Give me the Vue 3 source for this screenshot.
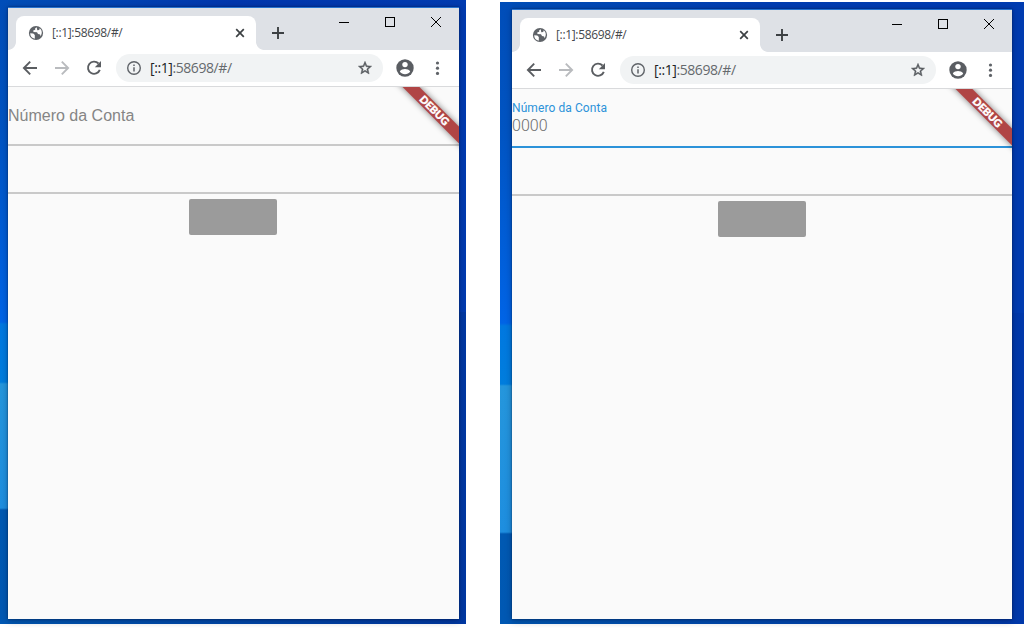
<script setup>
const desktops = [
  { id: 'left', label: 'idle' },
  { id: 'right', label: 'focused' },
]
</script>

<template>
  <main class="page">
    <section v-for="d in desktops" :key="d.id" class="desktop" :class="d.id">
      <div class="window">
        <header class="strip">
          <div class="tab">
            <svg class="globe" width="16" height="16" viewBox="0 0 16 16">
              <circle cx="8" cy="8" r="7.1" fill="#5f6368" />
              <path d="M2.2 8.2L5.3 8.5L6.8 10.1V13.7C4 13.2 2.1 11.1 2.2 8.2ZM8.7 2.3L7.2 3.2V4.7L5.2 5.4L5.5 7L9 7.3L10 9.1L12.1 9.4L12.6 11.2C14.6 8.1 14 4.9 11.7 3.3L11.2 5L9.3 5.2Z" fill="#fff" />
            </svg>
            <span class="title">[::1]:58698/#/</span>
            <svg class="tab-close" width="16" height="16" viewBox="0 0 16 16"><path d="M4.2 4.2L11.8 11.8M11.8 4.2L4.2 11.8" stroke="#3c4043" stroke-width="1.7" /></svg>
          </div>
          <svg class="plus" width="16" height="16" viewBox="0 0 16 16"><path d="M8 2V14M2 8H14" stroke="#3c4043" stroke-width="1.9" /></svg>
          <div class="controls">
            <svg width="46" height="28" viewBox="0 0 46 28"><path d="M18 14.5H28" stroke="#000" /></svg>
            <svg width="46" height="28" viewBox="0 0 46 28"><rect x="18.5" y="9.5" width="9" height="9" fill="none" stroke="#000" /></svg>
            <svg width="46" height="28" viewBox="0 0 46 28"><path d="M18 9L28 19M28 9L18 19" stroke="#000" stroke-width="1" /></svg>
          </div>
        </header>
        <nav class="toolbar">
          <svg class="nav" width="32" height="36" viewBox="0 0 32 36"><path d="M23 18H10.5M16.2 11.7L9.9 18L16.2 24.3" fill="none" stroke="#5a5d61" stroke-width="1.9" /></svg>
          <svg class="nav" width="32" height="36" viewBox="0 0 32 36"><path d="M9 18H21.5M15.8 11.7L22.1 18L15.8 24.3" fill="none" stroke="#b9bbbe" stroke-width="1.9" /></svg>
          <svg class="nav" width="32" height="36" viewBox="0 0 32 36"><path d="M20.5 13.5A6.1 6.1 0 1 0 21.8 19.9" fill="none" stroke="#5a5d61" stroke-width="1.9" /><path d="M23 11V17.2H16.8Z" fill="#5a5d61" /></svg>
          <div class="omnibox">
            <svg width="16" height="16" viewBox="0 0 16 16"><circle cx="8" cy="8" r="6.3" fill="none" stroke="#5f6368" stroke-width="1.4" /><path d="M8 7.2V11.5M8 4.4V6" stroke="#5f6368" stroke-width="1.5" /></svg>
            <span class="url"><b>[::1]</b>:58698/#/</span>
            <svg class="star" width="16" height="16" viewBox="0 0 24 24"><path d="M22 9.24l-7.19-.62L12 2 9.19 8.63 2 9.24l5.46 4.73L5.82 21 12 17.27 18.18 21l-1.63-7.03L22 9.24zM12 15.4l-3.76 2.27 1-4.28-3.32-2.88 4.38-.38L12 6.1l1.71 4.04 4.38.38-3.32 2.88 1 4.28L12 15.4z" fill="#55585c" stroke="#55585c" stroke-width=".7" /></svg>
          </div>
          <svg class="avatar" width="20" height="20" viewBox="0 0 20 20"><circle cx="10" cy="10" r="8.7" fill="#5a5d62" /><circle cx="10" cy="6.6" r="2.7" fill="#fff" /><path d="M4.8 13.4C5.8 11.7 8.2 11 10 11S14.2 11.7 15.2 13.4C14 15.2 12.1 16.2 10 16.2S6 15.2 4.8 13.4Z" fill="#fff" /></svg>
          <svg class="dots" width="6" height="16" viewBox="0 0 6 16"><circle cx="2.5" cy="3" r="1.6" /><circle cx="2.5" cy="8.2" r="1.6" /><circle cx="2.5" cy="13.4" r="1.6" /></svg>
        </nav>
        <div class="content">
          <label class="field account" :class="d.label">
            <span class="label">Número da Conta</span>
            <span v-if="d.label === 'focused'" class="hint">0000</span>
          </label>
          <div class="field empty"></div>
          <div class="button"></div>
          <svg class="banner" width="80" height="80" viewBox="0 0 80 80">
            <g transform="translate(56 24) rotate(45)">
              <rect class="ribbon" x="-50" y="-6" width="100" height="12" />
              <text x="-0.8" y="3.8" text-anchor="middle" textLength="37" lengthAdjust="spacingAndGlyphs">DEBUG</text>
            </g>
          </svg>
        </div>
      </div>
    </section>
  </main>
</template>

<style>
body { background: #fff; overflow: hidden; }
</style>

<style scoped>
.page { display: flex; gap: 34px; width: 1024px; height: 628px; font-family: "Open Sans", "Noto Sans", sans-serif; }
.desktop { box-sizing: border-box; flex: none; display: flex; background-repeat: no-repeat; }
.left {
  width: 466px; height: 624px; padding: 7px 7px 5px 8px;
  background-image:
    linear-gradient(#004db8 0, #0054c2 130px, #0064e6 322px, #0078e0 324px, #007ddd 382px, #2596dc 384px, #1e8edf 508px, #0059b2 510px, #0058b3 624px),
    linear-gradient(90deg, #004eb6, #0036ac 50%, #003bb0),
    linear-gradient(90deg, #0058b3, #0038a2);
  background-size: 8px 100%, 100% 50%, 100% 50%;
  background-position: 0 0, 0 0, 0 100%;
}
.right {
  width: 524px; height: 622px; margin-top: 2px; padding: 7px 12px 5px;
  background-image:
    linear-gradient(#004db8 0, #0054c2 130px, #0064e6 321px, #0078e0 324px, #007ddd 382px, #2596dc 384px, #1e8edf 530px, #0059b2 532px, #0058b3 622px),
    linear-gradient(90deg, #004eb6, #003cb0 50%, #003bb0),
    linear-gradient(90deg, #0058b3, #0038aa);
  background-size: 12px 100%, 100% 50%, 100% 50%;
  background-position: 0 0, 0 0, 0 100%;
}
.window {
  flex: 1; min-width: 0; display: flex; flex-direction: column; background: #fafafa;
  border-top: 1px solid #2672cf; box-shadow: 0 0 2px #00143499, 0 2px 7px #00143455;
}
.strip { height: 42px; flex: none; display: flex; background: #dee1e6; }
.tab {
  box-sizing: border-box; position: relative; width: 240px; height: 34px; margin: 8px 0 0 8px; padding: 0 8px 0 12px;
  display: flex; align-items: center; background: #fff; border-radius: 8px 8px 0 0;
}
.tab::before, .tab::after { content: ""; position: absolute; bottom: 0; width: 8px; height: 8px; }
.tab::before { left: -8px; background: radial-gradient(circle at 0 0, transparent 7.5px, #fff 8.2px); }
.tab::after { right: -8px; background: radial-gradient(circle at 100% 0, transparent 7.5px, #fff 8.2px); }
.title { margin-left: 8px; font-size: 12px; line-height: 16px; color: #45484c; letter-spacing: -.33px; }
.tab-close { margin-left: auto; }
.plus { margin: 17px 0 0 14px; }
.controls { display: flex; margin-left: auto; }
.toolbar { box-sizing: border-box; height: 37px; flex: none; display: flex; align-items: center; background: #fff; padding: 0 18px 0 6px; border-bottom: 1px solid #d9dadc; }
.nav { flex: none; }
.omnibox { box-sizing: border-box; flex: 1; height: 28px; margin-left: 6px; padding: 0 10px; display: flex; align-items: center; background: #f1f3f4; border-radius: 14px; }
.url { margin-left: 8px; font-size: 14px; line-height: 20px; color: #65696d; letter-spacing: -.42px; }
.url b { font-weight: 400; color: #202124; }
.star { margin-left: auto; }
.avatar { margin-left: 12px; }
.dots { margin-left: 20px; fill: #5f6368; }
.content { position: relative; flex: 1; display: flex; flex-direction: column; overflow: hidden; }
.field { box-sizing: border-box; flex: none; display: flex; flex-direction: column; border-bottom: 2px solid #c9c9c9; }
.account { height: 59px; font-family: "Liberation Sans", Arial, sans-serif; }
.empty { height: 48px; }
.idle .label { padding-top: 19px; font-size: 16px; line-height: 20px; color: #858585; }
.focused { border-color: #2c92d9; }
.focused .label { padding-top: 11px; font-family: Roboto, sans-serif; font-size: 12px; line-height: 16px; color: #2c92d9; letter-spacing: .08px; }
.focused .hint { font-family: Roboto, sans-serif; font-weight: 300; font-size: 16px; line-height: 20px; color: #6c6c6c; }
.button { width: 88px; height: 36px; margin: 5px auto 0; background: #9b9b9b; border-radius: 2px; }
.left .button { margin-left: 181px; }
.banner { position: absolute; top: 0; right: 0; }
.ribbon { fill: #b04545; filter: drop-shadow(0 0 3px rgba(0, 0, 0, .5)); }
.banner text { font-family: Lato, sans-serif; font-size: 10.5px; font-weight: 900; fill: #fff; stroke: #fff; stroke-width: .4px; }
</style>
